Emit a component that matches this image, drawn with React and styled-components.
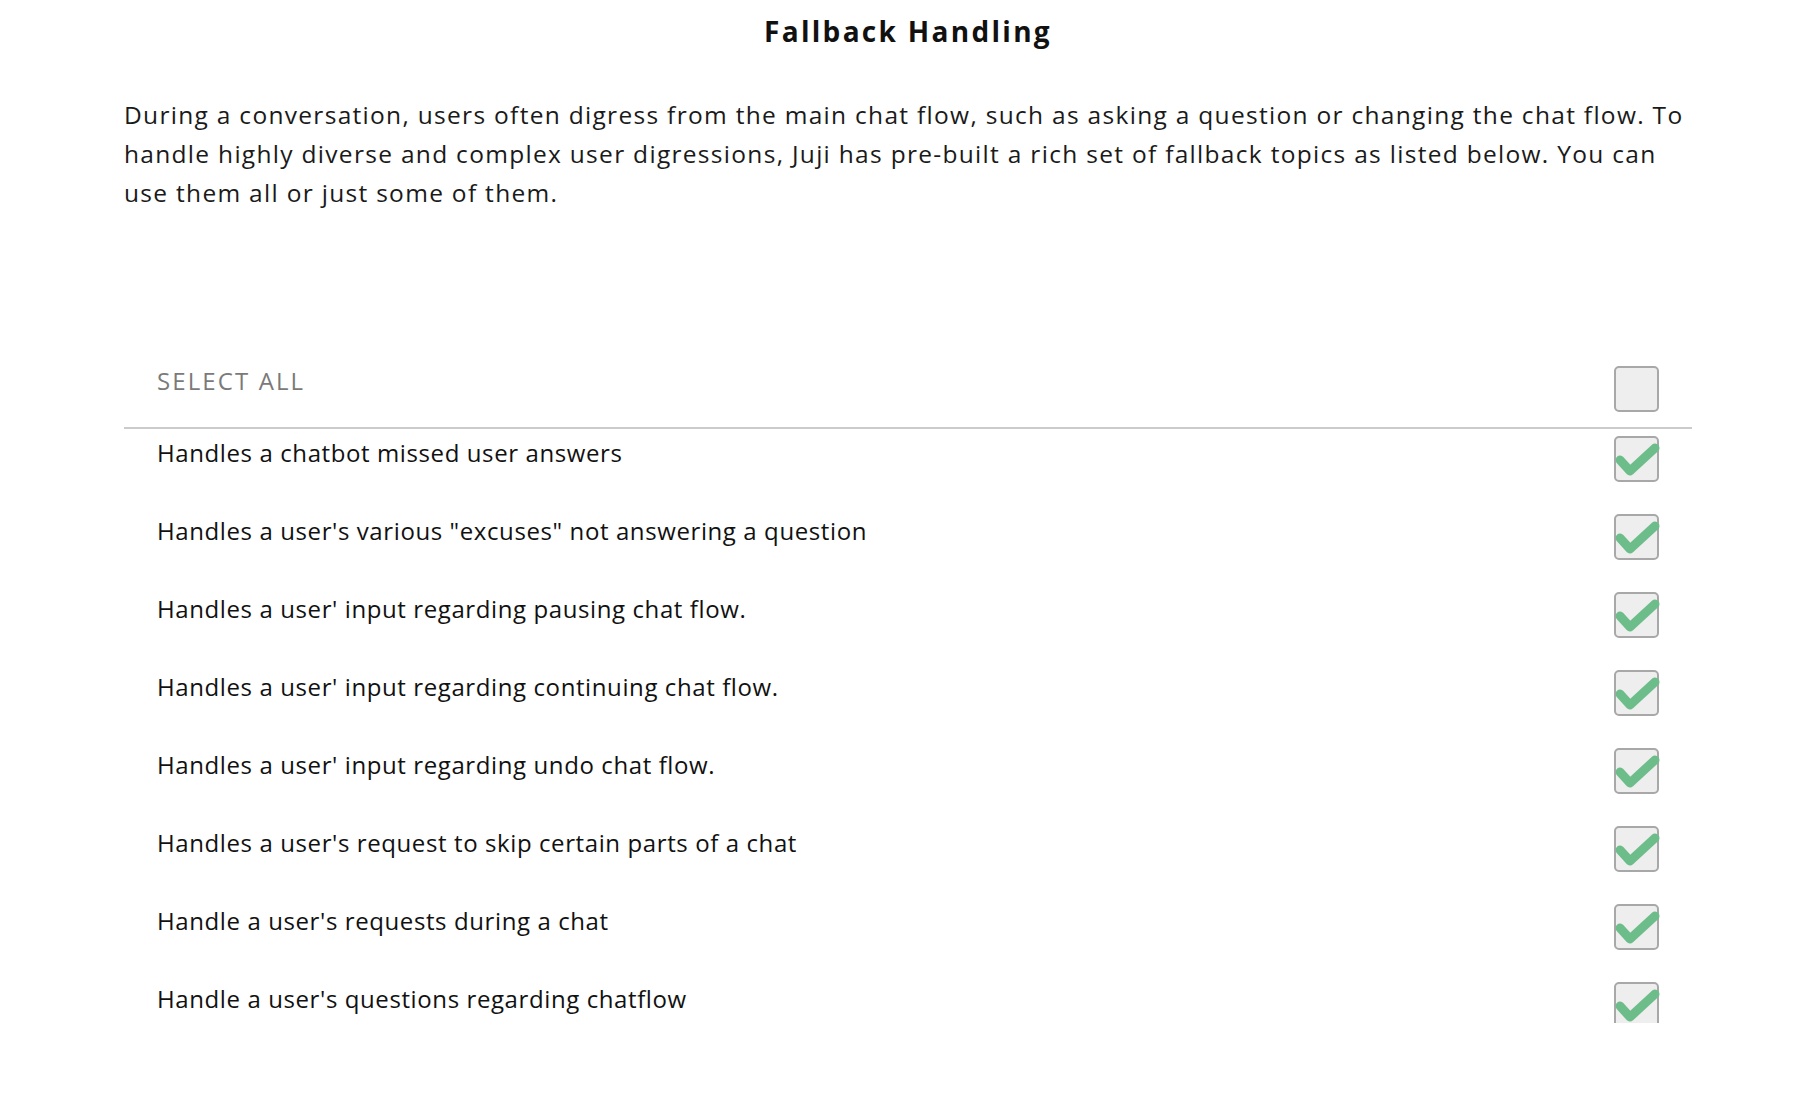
import * as React from "react";
import styled, { createGlobalStyle } from "styled-components";

const GlobalStyle = createGlobalStyle`
  body {
    margin: 0;
    background: #ffffff;
    font-family: "Open Sans", Lato, sans-serif;
    color: #111;
  }
`;

const Page = styled.div`
  padding: 0 128px 0 124px;
  box-sizing: border-box;
  width: 100%;
`;

const Title = styled.h1`
  margin: 0;
  padding-top: 12px;
  font-size: 28px;
  line-height: 38px;
  font-weight: 700;
  text-align: center;
  letter-spacing: 2.3px;
`;

const Intro = styled.p`
  margin: 45px 0 0;
  font-size: 24.5px;
  line-height: 39px;
  letter-spacing: 1.3px;
  color: #1a1a1a;
`;

const Panel = styled.div`
  margin-top: 154px;
`;

const Header = styled.div`
  display: flex;
  align-items: flex-start;
  justify-content: space-between;
  padding: 0 33px;
  height: 61px;
  border-bottom: 2px solid #cbcbcb;
`;

const HeaderLabel = styled.div`
  font-size: 24px;
  line-height: 30px;
  color: #7a7a7a;
  letter-spacing: 2.1px;
`;

const List = styled.div`
  height: 594px;
  overflow: hidden;
`;

const Row = styled.div`
  display: flex;
  align-items: flex-start;
  justify-content: space-between;
  height: 78px;
  padding: 7px 33px 0;
  box-sizing: border-box;
`;

const RowLabel = styled.div`
  font-size: 24px;
  line-height: 34px;
  letter-spacing: 0.6px;
  color: #111;
`;

const Box = styled.div`
  position: relative;
  width: 45px;
  height: 46px;
  box-sizing: border-box;
  border: 2px solid #a8a8a8;
  border-radius: 5px;
  background: #eeeeee;
  flex-shrink: 0;
`;

const Tick = styled.svg`
  position: absolute;
  left: -2px;
  top: -2px;
  width: 45px;
  height: 46px;
  overflow: visible;
`;

const Checkbox = ({ checked }) => (
  <Box>
    {checked && (
      <Tick viewBox="0 0 45 46">
        <polyline
          points="6,24 16,35 41,12"
          fill="none"
          stroke="#6dbd8b"
          strokeWidth="9"
          strokeLinecap="round"
          strokeLinejoin="round"
        />
      </Tick>
    )}
  </Box>
);

const topics = [
  "Handles a chatbot missed user answers",
  "Handles a user's various \"excuses\" not answering a question",
  "Handles a user' input regarding pausing chat flow.",
  "Handles a user' input regarding continuing chat flow.",
  "Handles a user' input regarding undo chat flow.",
  "Handles a user's request to skip certain parts of a chat",
  "Handle a user's requests during a chat",
  "Handle a user's questions regarding chatflow",
];

export default function App() {
  return (
    <>
      <GlobalStyle />
      <Page>
        <Title>Fallback Handling</Title>
        <Intro>
          During a conversation, users often digress from the main chat flow, such as asking a
          question or changing the chat flow. To handle highly diverse and complex user
          digressions, Juji has pre-built a rich set of fallback topics as listed below. You can
          use them all or just some of them.
        </Intro>
        <Panel>
          <Header>
            <HeaderLabel>SELECT ALL</HeaderLabel>
            <Checkbox checked={false} />
          </Header>
          <List>
            {topics.map((t) => (
              <Row key={t}>
                <RowLabel>{t}</RowLabel>
                <Checkbox checked />
              </Row>
            ))}
          </List>
        </Panel>
      </Page>
    </>
  );
}
